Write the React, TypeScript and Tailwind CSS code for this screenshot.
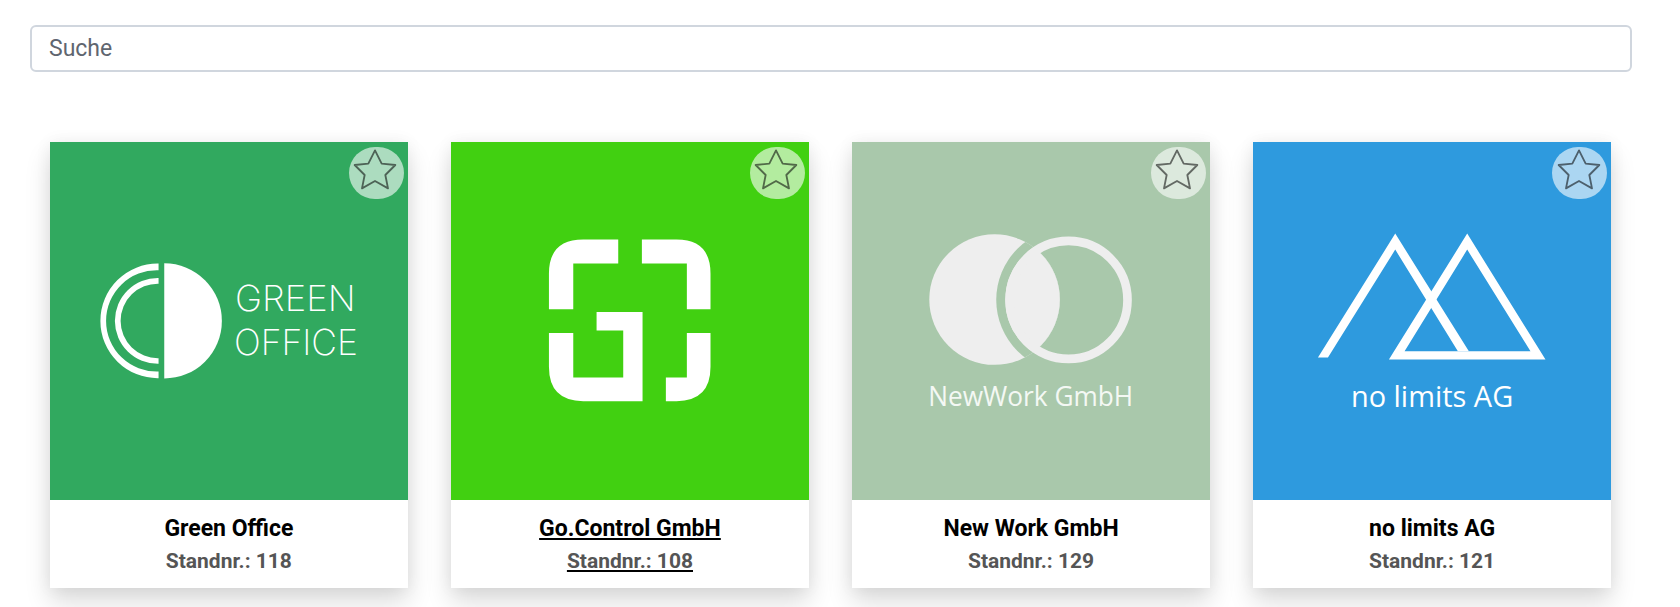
import React from "react";

function Star() {
  return (
    <svg viewBox="940 48 144 132" className="w-[48px] h-[44px] block -mt-[8px] -ml-[2px]">
      <polygon
        points="1012,58 1032,98 1073,102 1043,132 1051,172 1012,150 973,172 981,132 951,102 992,98"
        fill="none"
        stroke="#000"
        strokeOpacity="0.55"
        strokeWidth="5.5"
        strokeLinejoin="round"
      />
    </svg>
  );
}

function GreenLogo() {
  return (
    <svg viewBox="30 -264 1071 1071" className="w-full h-full block">
      <path d="M355 100 A171.52 171.52 0 1 0 355 443 V423 A151.6 151.6 0 1 1 355 120 Z" fill="#fff" />
      <path d="M355 143 A128.52 128.52 0 1 0 355 400 V383 A111.52 111.52 0 1 1 355 160 Z" fill="#fff" />
      <path d="M372 99 A172.5 172.5 0 0 1 372 444 Z" fill="#fff" />
      <text x="584" y="243" fontFamily="Inter, sans-serif" fontWeight="200" fontSize="107" fill="#fff" textLength="361" lengthAdjust="spacingAndGlyphs">GREEN</text>
      <text x="581" y="373" fontFamily="Inter, sans-serif" fontWeight="200" fontSize="107" fill="#fff" textLength="371" lengthAdjust="spacingAndGlyphs">OFFICE</text>
    </svg>
  );
}

function GoLogo() {
  return (
    <svg viewBox="33 35 1074 1074" className="w-full h-full block">
      <g fill="#fff">
        <path d="M327 537 V430 Q327 328 430 328 H535 V400 H400 V537 Z" />
        <path d="M606 328 H710 Q812 328 812 430 V537 H741 V400 H606 Z" />
        <path d="M327 608 H400 V742 H550 V601 H470 V545 H608 V813 H430 Q327 813 327 710 Z" />
        <path d="M812 608 V710 Q812 813 710 813 H678 V742 H741 V608 Z" />
      </g>
    </svg>
  );
}

function NewWorkLogo() {
  const bg = "#a9c8ab";
  const light = "#eeeeee";
  return (
    <svg viewBox="36 35 1074 1074" className="w-full h-full block">
      <defs>
        <clipPath id="nw-left">
          <circle cx="464" cy="508" r="196" />
        </clipPath>
      </defs>
      <circle cx="464" cy="508" r="196" fill={light} />
      <circle cx="686" cy="509" r="217" fill={bg} clipPath="url(#nw-left)" />
      <circle cx="686" cy="509" r="190" fill={light} clipPath="url(#nw-left)" />
      <circle cx="686" cy="509" r="177" fill="none" stroke={light} strokeWidth="26" />
      <text x="265" y="828" fontFamily="'Open Sans', sans-serif" fontWeight="400" fontSize="81" fill="#f4f8f4" textLength="615" lengthAdjust="spacingAndGlyphs">NewWork GmbH</text>
    </svg>
  );
}

function LimitsLogo() {
  return (
    <svg viewBox="40 35 1074 1074" className="w-full h-full block">
      <g fill="#fff">
        <path d="M235 682 L467 310 L688 663 L655 663 L467 358 L265 682 Z" />
        <path fillRule="evenodd" d="M683 310 L918 688 L448 688 Z M683 358 L495 663 L873 663 Z" />
      </g>
      <text x="334" y="830" fontFamily="'Open Sans', sans-serif" fontWeight="400" fontSize="90" fill="#fff" textLength="487" lengthAdjust="spacingAndGlyphs">no limits AG</text>
    </svg>
  );
}

const cards = [
  { name: "Green Office", stand: "Standnr.: 118", bg: "bg-[#31a95f]", logo: <GreenLogo />, hover: false },
  { name: "Go.Control GmbH", stand: "Standnr.: 108", bg: "bg-[#41d011]", logo: <GoLogo />, hover: true },
  { name: "New Work GmbH", stand: "Standnr.: 129", bg: "bg-[#a9c8ab]", logo: <NewWorkLogo />, hover: false },
  { name: "no limits AG", stand: "Standnr.: 121", bg: "bg-[#2e9ade]", logo: <LimitsLogo />, hover: false },
];

export default function App() {
  return (
    <div className="h-[607px] overflow-hidden bg-white font-['Roboto',sans-serif]">
      <div className="pt-[25px] pl-[30px] pr-[48px]">
        <input
          placeholder="Suche"
          className="block w-full h-[47px] px-[17px] rounded-[6px] border-2 border-[#d0d6de] bg-white text-[23px] text-[#495057] placeholder:text-[#5f6670] outline-none"
        />
      </div>
      <div className="grid grid-cols-4 gap-[43.3px] mt-[70px] ml-[50px] mr-[69px]">
        {cards.map((c) => (
          <div
            key={c.name}
            className="bg-white h-[446px] shadow-[0_14px_24px_rgba(0,0,0,0.14),0_0_16px_rgba(0,0,0,0.06)]"
          >
            <div className={`relative aspect-square ${c.bg}`}>
              {c.logo}
              <div className="absolute top-[5px] right-[4px] w-[55px] h-[52px] rounded-full bg-white/60 flex items-center justify-center">
                <Star />
              </div>
            </div>
            <div className={`pt-[14px] text-center font-bold ${c.hover ? "underline" : ""}`}>
              <div className="text-[23px] leading-[30px] text-black">{c.name}</div>
              <div className="text-[21px] leading-[27px] mt-[4px] text-[#555555]">{c.stand}</div>
            </div>
          </div>
        ))}
      </div>
    </div>
  );
}
